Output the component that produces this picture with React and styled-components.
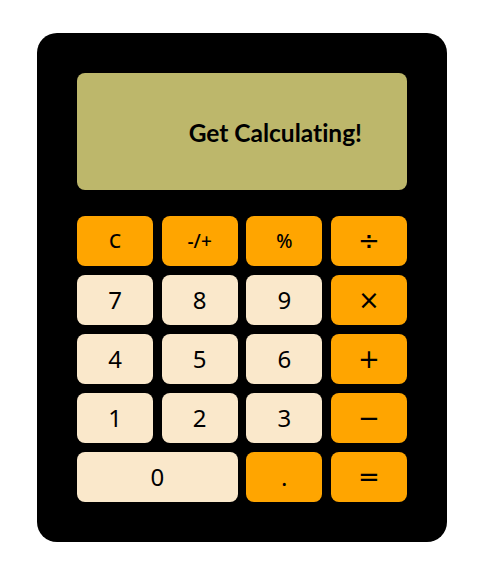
import React from "react";
import styled, { createGlobalStyle } from "styled-components";

const GlobalStyle = createGlobalStyle`
  body {
    margin: 0;
    background: #fff;
  }
`;

const keys = [
  { label: "C", kind: "op", small: true },
  { label: "-/+", kind: "op", small: true },
  { label: "%", kind: "op", small: true },
  { label: "÷", kind: "op", sign: true },
  { label: "7" },
  { label: "8" },
  { label: "9" },
  { label: "×", kind: "op", sign: true },
  { label: "4" },
  { label: "5" },
  { label: "6" },
  { label: "+", kind: "op", sign: true },
  { label: "1" },
  { label: "2" },
  { label: "3" },
  { label: "−", kind: "op", sign: true },
  { label: "0", wide: true },
  { label: ".", kind: "op" },
  { label: "=", kind: "op", sign: true },
];

const App = () => {
  return (
    <Page>
      <GlobalStyle />
      <Calculator>
        <Display>Get Calculating!</Display>
        <Keypad>
          {keys.map((k) => (
            <Key
              key={k.label}
              $op={k.kind === "op"}
              $wide={k.wide}
              $sign={k.sign}
              $small={k.small}
            >
              {k.label}
            </Key>
          ))}
        </Keypad>
      </Calculator>
    </Page>
  );
};

const Page = styled.div`
  display: flex;
  justify-content: center;
  padding-top: 33px;
`;

const Calculator = styled.div`
  width: 330px;
  padding: 40px;
  background: #000;
  border-radius: 20px;
  display: flex;
  flex-direction: column;
  gap: 26px;
`;

const Display = styled.div`
  height: 117px;
  background: #bdb76b;
  border-radius: 8px;
  display: flex;
  align-items: center;
  justify-content: flex-end;
  padding-right: 45px;
  padding-top: 2px;
  box-sizing: border-box;
  font-family: Lato, "Liberation Sans", sans-serif;
  font-weight: 700;
  font-size: 24.5px;
  font-variant-ligatures: none;
  color: #000;
`;

const Keypad = styled.div`
  display: grid;
  grid-template-columns: repeat(4, 1fr);
  grid-auto-rows: 50px;
  column-gap: 8.7px;
  row-gap: 9px;
`;

const Key = styled.button`
  grid-column: ${(props) => (props.$wide ? "span 2" : "auto")};
  border: none;
  border-radius: 8px;
  background: ${(props) => (props.$op ? "#ffa500" : "#fae8cb")};
  color: #000;
  font-family: ${(props) =>
    props.$sign ? `"DejaVu Sans", sans-serif` : `"Noto Sans", "DejaVu Sans", sans-serif`};
  font-size: ${(props) => (props.$sign ? "26px" : props.$small ? "19px" : "24px")};
  font-weight: ${(props) => (props.$small ? 500 : 400)};
  line-height: 1;
  padding: 0;
  cursor: pointer;
`;

export default App;
